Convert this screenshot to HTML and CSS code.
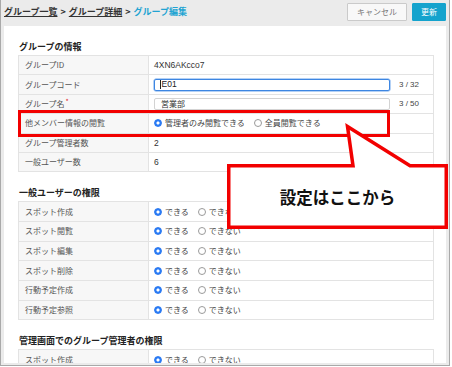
FILE: index.html
```html
<!DOCTYPE html>
<html lang="ja">
<head>
<meta charset="utf-8">
<title>グループ編集</title>
<link rel="stylesheet" href="styles.css">
</head>
<body>
<div class="window">
  <header class="topbar">
    <nav class="crumbs"><a href="#">グループ一覧</a><span class="sep">&gt;</span><a href="#">グループ詳細</a><span class="sep">&gt;</span><span class="current">グループ編集</span></nav>
    <div class="actions">
      <button class="btn btn-cancel">キャンセル</button>
      <button class="btn btn-primary">更新</button>
    </div>
  </header>
  <main class="content">
    <section class="section">
      <h2 class="section-title">グループの情報</h2>
      <div class="table">
        <div class="row"><div class="label">グループID</div><div class="value latin">4XN6AKcco7</div></div>
        <div class="row"><div class="label">グループコード</div><div class="value"><div class="field focus"><span class="caret"></span>E01</div><span class="count">3 / 32</span></div></div>
        <div class="row"><div class="label">グループ名<span class="req">*</span></div><div class="value"><div class="field">営業部</div><span class="count">3 / 50</span></div></div>
        <div class="row"><div class="label">他メンバー情報の閲覧</div><div class="value"><span class="opt"><span class="dot on"></span>管理者のみ閲覧できる</span><span class="opt"><span class="dot"></span>全員閲覧できる</span></div></div>
        <div class="row"><div class="label">グループ管理者数</div><div class="value latin">2</div></div>
        <div class="row"><div class="label">一般ユーザー数</div><div class="value latin">6</div></div>
      </div>
    </section>
    <section class="section">
      <h2 class="section-title">一般ユーザーの権限</h2>
      <div class="table perm">
        <div class="row"><div class="label">スポット作成</div><div class="value"><span class="opt"><span class="dot on"></span>できる</span><span class="opt"><span class="dot"></span>できない</span></div></div>
        <div class="row"><div class="label">スポット閲覧</div><div class="value"><span class="opt"><span class="dot on"></span>できる</span><span class="opt"><span class="dot"></span>できない</span></div></div>
        <div class="row"><div class="label">スポット編集</div><div class="value"><span class="opt"><span class="dot on"></span>できる</span><span class="opt"><span class="dot"></span>できない</span></div></div>
        <div class="row"><div class="label">スポット削除</div><div class="value"><span class="opt"><span class="dot on"></span>できる</span><span class="opt"><span class="dot"></span>できない</span></div></div>
        <div class="row"><div class="label">行動予定作成</div><div class="value"><span class="opt"><span class="dot on"></span>できる</span><span class="opt"><span class="dot"></span>できない</span></div></div>
        <div class="row"><div class="label">行動予定参照</div><div class="value"><span class="opt"><span class="dot on"></span>できる</span><span class="opt"><span class="dot"></span>できない</span></div></div>
      </div>
    </section>
    <section class="section">
      <h2 class="section-title">管理画面でのグループ管理者の権限</h2>
      <div class="table perm">
        <div class="row"><div class="label">スポット作成</div><div class="value"><span class="opt"><span class="dot on"></span>できる</span><span class="opt"><span class="dot"></span>できない</span></div></div>
      </div>
    </section>
  </main>
</div>
<div class="highlight"></div>
<svg class="callout-shape" width="452" height="367" viewBox="0 0 452 367" aria-hidden="true">
  <path d="M228.75 165.75 H353 L347.5 126.5 L410 165.75 H446.25 V227.25 H228.75 Z" fill="#fff" stroke="#f20000" stroke-width="3.5" stroke-linejoin="miter"/>
</svg>
<div class="callout-text">設定はここから</div>
</body>
</html>
```

FILE: styles.css
```css
* { box-sizing: border-box; }
html, body { margin: 0; padding: 0; background: #fff; }
body {
  position: relative;
  width: 452px;
  height: 367px;
  overflow: hidden;
  font-family: "Noto Sans CJK JP", sans-serif;
}
.window {
  width: 450px;
  height: 366px;
  background: #ebebeb;
  border: 1px solid #a9a9a9;
  border-top: 0;
  padding: 0 3px 2px;
  display: flex;
  flex-direction: column;
  overflow: hidden;
}
.topbar {
  height: 26px;
  flex: none;
  display: flex;
  align-items: center;
  justify-content: space-between;
  padding-bottom: 2px;
}
.crumbs {
  font-size: 9px;
  line-height: 12px;
  font-weight: 700;
  color: #333;
  white-space: nowrap;
}
.crumbs a { color: #333; text-decoration: underline; }
.crumbs .sep { margin: 0 3px; }
.crumbs .current { color: #22a3d2; }
.actions { display: flex; gap: 5px; }
.btn {
  height: 18px;
  font-family: "Noto Sans CJK JP", sans-serif;
  font-size: 8px;
  line-height: 16px;
  padding: 0;
  border: 1px solid #cacaca;
  border-radius: 1px;
  cursor: pointer;
}
.btn-cancel { width: 60px; background: #f8f8f8; color: #777; }
.btn-primary { width: 34px; background: #14a3cd; border-color: #14a3cd; color: #fff; }

.content {
  flex: 1;
  background: #fff;
  padding: 15px 12px 0 14px;
  overflow: hidden;
}
.section + .section { margin-top: 15px; }
.section-title {
  margin: 0 0 2px 1px;
  font-size: 9px;
  line-height: 12px;
  font-weight: 700;
  color: #222;
}
.table { border: 1px solid #e3e3e3; border-bottom: 0; }
.row {
  display: grid;
  grid-template-columns: 130px 1fr;
  height: 19.4px;
  border-bottom: 1px solid #e3e3e3;
}
.perm .row { height: 19.7px; }
.label {
  display: flex;
  align-items: center;
  padding-left: 6px;
  background: #f7f7f7;
  border-right: 1px solid #e3e3e3;
  font-size: 8px;
  line-height: 1;
  color: #555;
  white-space: nowrap;
}
.req { color: #e0201c; font-size: 7px; margin-left: 1px; position: relative; top: -2px; }
.value {
  display: flex;
  align-items: center;
  padding-left: 5px;
  font-size: 8px;
  line-height: 1;
  color: #333;
  white-space: nowrap;
}
.latin { font-family: "Liberation Sans", "Noto Sans CJK JP", sans-serif; font-size: 8.5px; }
.field {
  width: 236px;
  height: 12px;
  display: flex;
  align-items: center;
  border: 1px solid #d3d3d3;
  border-radius: 2px;
  padding-left: 6px;
  font-size: 8px;
  color: #333;
}
.field.focus {
  border-color: #3d86e2;
  box-shadow: 0 0 0 0.5px #6aa3ec;
  padding-left: 5px;
  font-family: "Liberation Sans", sans-serif;
  font-size: 8.5px;
  color: #222;
}
.caret { width: 1px; height: 9px; background: #222; margin-right: 0.5px; }
.count {
  margin-left: 9px;
  font-family: "Liberation Sans", sans-serif;
  font-size: 8px;
  color: #444;
}
.opt { display: inline-flex; align-items: center; margin-right: 9px; color: #444; }
.dot {
  width: 8px;
  height: 8px;
  border-radius: 50%;
  margin-right: 3px;
  border: 1px solid #9a9a9a;
  background: #fff;
}
.dot.on {
  border-color: #2a78f0;
  background: radial-gradient(circle, #fff 0 1.3px, #2a7cf6 1.8px);
}

.highlight {
  position: absolute;
  left: 18px;
  top: 109.5px;
  width: 372px;
  height: 27.5px;
  border: 3.5px solid #f20000;
}
.callout-shape {
  position: absolute;
  left: 0;
  top: 0;
  pointer-events: none;
}
.callout-text {
  position: absolute;
  left: 227px;
  top: 164px;
  width: 221px;
  height: 65px;
  display: flex;
  align-items: center;
  justify-content: center;
  font-size: 16.5px;
  font-weight: 700;
  color: #111;
}
```
